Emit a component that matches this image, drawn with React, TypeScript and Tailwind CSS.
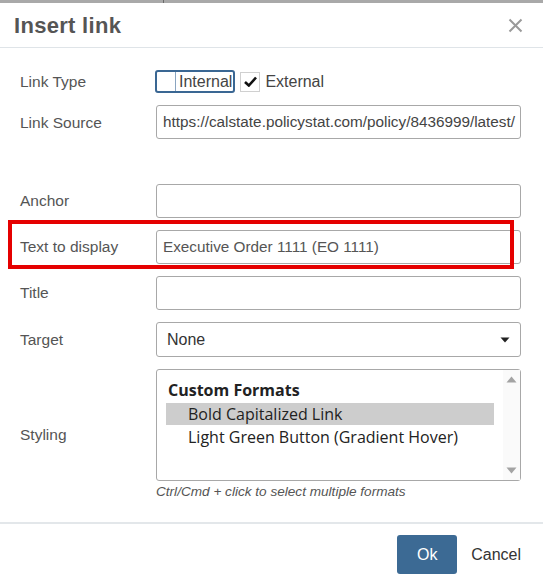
import * as React from "react"

function Label({ children, className = "" }: { children: React.ReactNode; className?: string }) {
  return <div className={"w-[136px] shrink-0 text-[15.5px] text-[#555]" + " " + className}>{children}</div>
}

function TextInput({ value = "", className = "" }: { value?: string; className?: string }) {
  return (
    <div
      className={
        "flex h-[34px] w-[365px] items-center rounded-[3px] border border-[#a8a8a8] bg-white px-[6px] text-[15.3px] whitespace-nowrap overflow-hidden " +
        className
      }
    >
      {value}
    </div>
  )
}

export default function App() {
  return (
    <div className="relative h-[582px] w-[543px] overflow-hidden bg-white font-['Liberation_Sans',Arial,sans-serif]">
      {/* strip of the page behind the dialog */}
      <div className="relative h-[3px] bg-[#a9a9a9]">
        <div className="absolute left-[163px] top-0 h-[3px] w-px bg-[#6a6a6a]" />
      </div>

      {/* header */}
      <div className="flex h-[45px] items-center justify-between border-b border-[#dfe4e8] pl-[14px] pr-[20px]">
        <h1 className="text-[22px] font-bold text-[#555] tracking-[0.3px]">Insert link</h1>
        <svg width="15" height="15" viewBox="0 0 15 15" className="text-[#9a9a9a]">
          <path d="M1.5 1.5 L13.5 13.5 M13.5 1.5 L1.5 13.5" stroke="currentColor" strokeWidth="2" />
        </svg>
      </div>

      {/* body */}
      <div className="pl-[20px] pr-[22px] pt-[22px]">
        <div className="flex h-[23px] items-center">
          <Label>Link Type</Label>
          <div className="-ml-[1px] flex items-center text-[16px] text-[#444]">
            <div className="flex h-[23px] items-center rounded-[3px] border-2 border-[#3a6793]">
              <span className="h-full w-[19px] border-r border-[#8aa5c0]" />
              <span className="pl-[3px] pr-[1px] leading-none">Internal</span>
            </div>
            <div className="ml-[5px] flex h-[20px] w-[20px] items-center justify-center border border-[#d0d0d0]">
              <svg width="13" height="11" viewBox="0 0 13 11">
                <path d="M1 6 L4.8 9.5 L12 1.5" fill="none" stroke="#111" strokeWidth="2.6" />
              </svg>
            </div>
            <span className="ml-[5px]">External</span>
          </div>
        </div>

        <div className="mt-[12px] flex items-center">
          <Label className="pt-[2px]">Link Source</Label>
          <TextInput value="https://calstate.policystat.com/policy/8436999/latest/" className="text-[#444]" />
        </div>

        <div className="mt-[45px] flex items-center">
          <Label>Anchor</Label>
          <TextInput />
        </div>

        <div className="mt-[12px] flex items-center">
          <Label>Text to display</Label>
          <TextInput value="Executive Order 1111 (EO 1111)" className="text-[#555]" />
        </div>

        <div className="mt-[12px] flex items-center">
          <Label>Title</Label>
          <TextInput />
        </div>

        <div className="mt-[12px] flex items-center">
          <Label>Target</Label>
          <div className="flex h-[35px] w-[365px] items-center justify-between rounded-[3px] border border-[#a8a8a8] pl-[10px] pr-[10px] text-[16px] text-[#333]">
            <span>None</span>
            <svg width="10" height="6" viewBox="0 0 10 6">
              <path d="M0.5 0.5 L9.5 0.5 L5 5.5 Z" fill="#222" />
            </svg>
          </div>
        </div>

        <div className="mt-[12px] flex items-center">
          <Label className="pt-[20px]">Styling</Label>
          <div className="flex h-[112px] w-[365px] rounded-[3px] border border-[#a8a8a8] font-['Open_Sans',sans-serif] text-[16px] text-[#222]">
            <div className="flex-1 pl-[9px] pr-[9px] pt-[8px]">
              <div className="h-[25px] pl-[2px] font-bold leading-[25px]">Custom Formats</div>
              <div className="h-[22px] bg-[#cdcdcd] pl-[22px] leading-[22px]">Bold Capitalized Link</div>
              <div className="h-[24px] pl-[22px] leading-[24px]">Light Green Button (Gradient Hover)</div>
            </div>
            <div className="flex w-[17px] flex-col items-center justify-between bg-[#fafafa] py-[6px]">
              <svg width="11" height="7" viewBox="0 0 11 7">
                <path d="M0.5 6.5 L10.5 6.5 L5.5 0.5 Z" fill="#a3a3a3" />
              </svg>
              <svg width="11" height="7" viewBox="0 0 11 7">
                <path d="M0.5 0.5 L10.5 0.5 L5.5 6.5 Z" fill="#a3a3a3" />
              </svg>
            </div>
          </div>
        </div>

        <div className="ml-[136px] mt-[1px] text-[13.6px] italic text-[#555]">Ctrl/Cmd + click to select multiple formats</div>
      </div>

      {/* footer */}
      <div className="mt-[20px] flex items-center justify-end border-t-2 border-[#e3e7ea] pr-[22px] pt-[11px]">
        <button className="h-[39px] w-[60px] rounded-[3px] bg-[#3c6a94] text-[16px] text-white">Ok</button>
        <span className="ml-[14px] text-[16px] text-[#333]">Cancel</span>
      </div>

      {/* annotation */}
      <div className="pointer-events-none absolute left-[8px] top-[220px] h-[49px] w-[506px] border-[4px] border-[#e50000]" />
    </div>
  )
}
